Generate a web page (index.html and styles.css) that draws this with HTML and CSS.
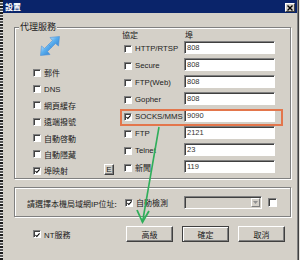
FILE: index.html
```html
<!DOCTYPE html>
<html>
<head>
<meta charset="utf-8">
<link rel="stylesheet" href="styles.css">
</head>
<body>
<div class="screen">
  <div class="strip"></div>
  <div class="win">
    <div class="title">
      <span class="title-text">設置</span>
      <span class="close"><svg width="6" height="6" viewBox="0 0 6 6"><path d="M0.5 0.5L5.5 5.5M5.5 0.5L0.5 5.5" stroke="#000" stroke-width="1.4"/></svg></span>
    </div>
    <div class="client">
      <div class="group g1">
        <span class="legend">代理服務</span>
        <div class="col col1">
          <div class="icon-cell">
            <svg class="icon" width="20" height="20" viewBox="0 0 20 20">
              <defs>
                <linearGradient id="bl" x1="0" y1="0" x2="1" y2="1">
                  <stop offset="0" stop-color="#d4ecff"/>
                  <stop offset="0.45" stop-color="#5aaeee"/>
                  <stop offset="1" stop-color="#2f7fd0"/>
                </linearGradient>
              </defs>
              <path d="M19.5 0.5 L18.5 10 L15.5 7.5 L11.5 11.5 L8.5 8.5 L12.5 4.5 L10 1.5 Z" fill="url(#bl)" stroke="#4a90d8" stroke-width="0.6" stroke-linejoin="round"/>
              <path d="M0.5 19.5 L1.5 10 L4.5 12.5 L8.5 8.5 L11.5 11.5 L7.5 15.5 L10 18.5 Z" fill="url(#bl)" stroke="#4a90d8" stroke-width="0.6" stroke-linejoin="round"/>
            </svg>
          </div>
          <div class="cb"><span class="box"></span><span>郵件</span></div>
          <div class="cb"><span class="box"></span><span class="en">DNS</span></div>
          <div class="cb"><span class="box"></span><span>網頁緩存</span></div>
          <div class="cb"><span class="box"></span><span>遠端撥號</span></div>
          <div class="cb"><span class="box"></span><span>自動啓動</span></div>
          <div class="cb"><span class="box"></span><span>自動隱藏</span></div>
          <div class="cb last">
            <span class="cbl"><span class="box checked"><svg width="6" height="6" viewBox="0 0 6 6"><path d="M0.5 3L2.2 4.8L5.5 1" fill="none" stroke="#000" stroke-width="1.3"/></svg></span><span>埠映射</span></span>
            <span class="ebtn en">E</span>
          </div>
        </div>
        <div class="col col2">
          <div class="head">協定</div>
          <div class="cb"><span class="box"></span><span class="en">HTTP/RTSP</span></div>
          <div class="cb"><span class="box"></span><span class="en">Secure</span></div>
          <div class="cb"><span class="box"></span><span class="en">FTP(Web)</span></div>
          <div class="cb"><span class="box"></span><span class="en">Gopher</span></div>
          <div class="cb"><span class="box checked"><svg width="6" height="6" viewBox="0 0 6 6"><path d="M0.5 3L2.2 4.8L5.5 1" fill="none" stroke="#000" stroke-width="1.3"/></svg></span><span class="en">SOCKS/MMS</span></div>
          <div class="cb"><span class="box"></span><span class="en">FTP</span></div>
          <div class="cb"><span class="box"></span><span class="en">Telnet</span></div>
          <div class="cb"><span class="box"></span><span>新聞</span></div>
        </div>
        <div class="col col3">
          <div class="head h3">埠</div>
          <div class="prow"><span class="port">808</span></div>
          <div class="prow"><span class="port">808</span></div>
          <div class="prow"><span class="port">808</span></div>
          <div class="prow"><span class="port">808</span></div>
          <div class="prow"><span class="port">9090</span></div>
          <div class="prow"><span class="port">2121</span></div>
          <div class="prow"><span class="port">23</span></div>
          <div class="prow"><span class="port">119</span></div>
        </div>
      </div>
      <div class="group g2">
        <span class="iplabel">請選擇本機局域網<span class="en">IP</span>位址:</span>
        <div class="cb auto"><span class="box checked"><svg width="6" height="6" viewBox="0 0 6 6"><path d="M0.5 3L2.2 4.8L5.5 1" fill="none" stroke="#000" stroke-width="1.3"/></svg></span><span>自動檢測</span></div>
        <div class="combo"><span class="combo-btn"><svg width="5" height="3" viewBox="0 0 5 3"><path d="M0 0H5L2.5 3Z" fill="#909090"/></svg></span></div>
        <span class="box small"></span>
      </div>
      <div class="bottom">
        <div class="cb nt"><span class="box checked"><svg width="6" height="6" viewBox="0 0 6 6"><path d="M0.5 3L2.2 4.8L5.5 1" fill="none" stroke="#000" stroke-width="1.3"/></svg></span><span><span class="en">NT</span>服務</span></div>
        <div class="btns">
          <span class="btn">高級</span>
          <span class="btn default">確定</span>
          <span class="btn">取消</span>
        </div>
      </div>
    </div>
    <div class="highlight"></div>
    <svg class="arrow" width="296" height="260" viewBox="0 0 296 260">
      <path d="M156 127 L139.5 222" stroke="#2fae5a" stroke-width="1.6" fill="none"/>
      <path d="M134 210 L139.5 222 L146 211" stroke="#2fae5a" stroke-width="1.8" fill="none" stroke-linejoin="miter"/>
    </svg>
  </div>
</div>
</body>
</html>
```

FILE: styles.css
```css
html, body {
  margin: 0;
  padding: 0;
}
body {
  width: 300px;
  height: 260px;
  overflow: hidden;
  background: #e4e2de;
  font-family: "Noto Sans CJK TC", "Noto Sans CJK SC", sans-serif;
  font-size: 8px;
  color: #1a1a1a;
}
.screen {
  display: flex;
  height: 260px;
}
.strip {
  width: 3px;
  background: repeating-linear-gradient(#1c1c1c 0 2px, #d8d8d8 2px 3px, #555 3px 5px, #f0f0f0 5px 6px);
}
.win {
  position: relative;
  width: 294px;
  height: 260px;
  background: #d4d0c8;
  border-right: 1px solid #808080;
  box-shadow: 1px 0 0 #404040;
  display: flex;
  flex-direction: column;
}
.title {
  height: 13px;
  background: #0a246a;
  display: flex;
  align-items: center;
  justify-content: space-between;
  padding: 0 2px 0 2px;
}
.title-text {
  color: #fff;
  font-weight: bold;
  font-size: 8px;
  line-height: 13px;
}
.close {
  width: 10px;
  height: 9px;
  box-sizing: border-box;
  background: #d4d0c8;
  border: 1px solid;
  border-color: #fff #404040 #404040 #fff;
  display: flex;
  align-items: center;
  justify-content: center;
  margin-top: 2px;
}
.client {
  padding: 14px 0 0 11px;
  display: flex;
  flex-direction: column;
}
.group {
  position: relative;
  box-sizing: border-box;
  width: 277px;
  border: 1px solid #808080;
  box-shadow: inset 1px 1px 0 #fff, 1px 1px 0 #fff;
}
.legend {
  position: absolute;
  left: 4px;
  top: -8px;
  padding: 0 1px;
  background: #d4d0c8;
  font-size: 9px;
  line-height: 14px;
}
.g1 {
  height: 152px;
  display: flex;
  padding-left: 18px;
}
.col {
  display: flex;
  flex-direction: column;
}
.col1 {
  width: 91px;
}
.col2 {
  width: 60px;
}
.col3 {
  width: 91px;
}
.icon-cell {
  height: 37px;
  display: flex;
  align-items: center;
  padding-left: 7px;
  padding-top: 1px;
  box-sizing: border-box;
}
.head {
  height: 10px;
  line-height: 12px;
  padding-top: 1px;
  margin-left: -2px;
}
.h3 {
  margin-left: 1px;
}
.cb {
  display: flex;
  align-items: center;
  gap: 3px;
  height: 17px;
  padding-top: 2px;
  box-sizing: border-box;
  white-space: nowrap;
}
.cb.last {
  justify-content: space-between;
  padding-right: 10px;
}
.cbl {
  display: flex;
  align-items: center;
  gap: 3px;
}
.box {
  width: 8px;
  height: 8px;
  box-sizing: border-box;
  background: #fff;
  border: 1px solid;
  border-color: #808080 #fff #fff #808080;
  box-shadow: inset 1px 1px 0 #404040;
  display: inline-flex;
  align-items: center;
  justify-content: center;
  flex: none;
}
.box svg {
  margin: 1px 0 0 1px;
}
.en {
  font-family: "Liberation Sans", Arial, sans-serif;
  font-size: 7.8px;
  color: #222;
}
.ebtn {
  width: 10px;
  height: 11px;
  box-sizing: border-box;
  border: 1px solid;
  border-color: #fff #404040 #404040 #fff;
  box-shadow: inset -1px -1px 0 #808080;
  display: flex;
  align-items: center;
  justify-content: center;
  font-size: 8px;
  margin-top: -2px;
}
.prow {
  height: 17px;
  display: flex;
  align-items: center;
}
.port {
  width: 91px;
  height: 13px;
  box-sizing: border-box;
  background: #fff;
  border: 1px solid;
  border-color: #808080 #fff #fff #808080;
  box-shadow: inset 1px 1px 0 #404040;
  font-family: "Liberation Sans", Arial, sans-serif;
  font-size: 7.5px;
  line-height: 11px;
  padding-left: 2px;
  color: #333;
}
.g2 {
  margin-top: 8px;
  height: 30px;
  display: flex;
  align-items: center;
  padding-left: 12px;
}
.iplabel {
  width: 98px;
  white-space: nowrap;
  padding-top: 2px;
}
.iplabel .en {
  font-size: 8px;
}
.cb.auto {
  width: 59px;
  padding-top: 1px;
}
.combo {
  width: 78px;
  height: 13px;
  box-sizing: border-box;
  background: #d4d0c8;
  border: 1px solid;
  border-color: #808080 #fff #fff #808080;
  box-shadow: inset 1px 1px 0 #404040;
  display: flex;
  justify-content: flex-end;
  align-items: center;
  padding-right: 1px;
}
.combo-btn {
  width: 9px;
  height: 9px;
  box-sizing: border-box;
  border: 1px solid;
  border-color: #fff #808080 #808080 #fff;
  display: flex;
  align-items: center;
  justify-content: center;
}
.box.small {
  width: 9px;
  height: 9px;
  margin-left: 6px;
  background: #fff;
}
.bottom {
  margin-top: 9px;
  display: flex;
  align-items: center;
  height: 16px;
}
.cb.nt {
  width: 93px;
  margin-left: 19px;
  padding-top: 0;
  height: 16px;
}
.btns {
  display: flex;
  gap: 9px;
}
.btn {
  width: 47px;
  height: 16px;
  box-sizing: border-box;
  border: 1px solid;
  border-color: #fff #404040 #404040 #fff;
  box-shadow: inset -1px -1px 0 #808080;
  display: flex;
  align-items: center;
  justify-content: center;
  font-size: 8px;
}
.btn.default {
  border-color: #404040;
  box-shadow: inset 1px 1px 0 #fff, inset -1px -1px 0 #808080;
}
.highlight {
  position: absolute;
  left: 117px;
  top: 109px;
  width: 163px;
  height: 17px;
  box-sizing: border-box;
  border: 2px solid #e3764c;
}
.arrow {
  position: absolute;
  left: 0;
  top: 0;
  pointer-events: none;
}
```
